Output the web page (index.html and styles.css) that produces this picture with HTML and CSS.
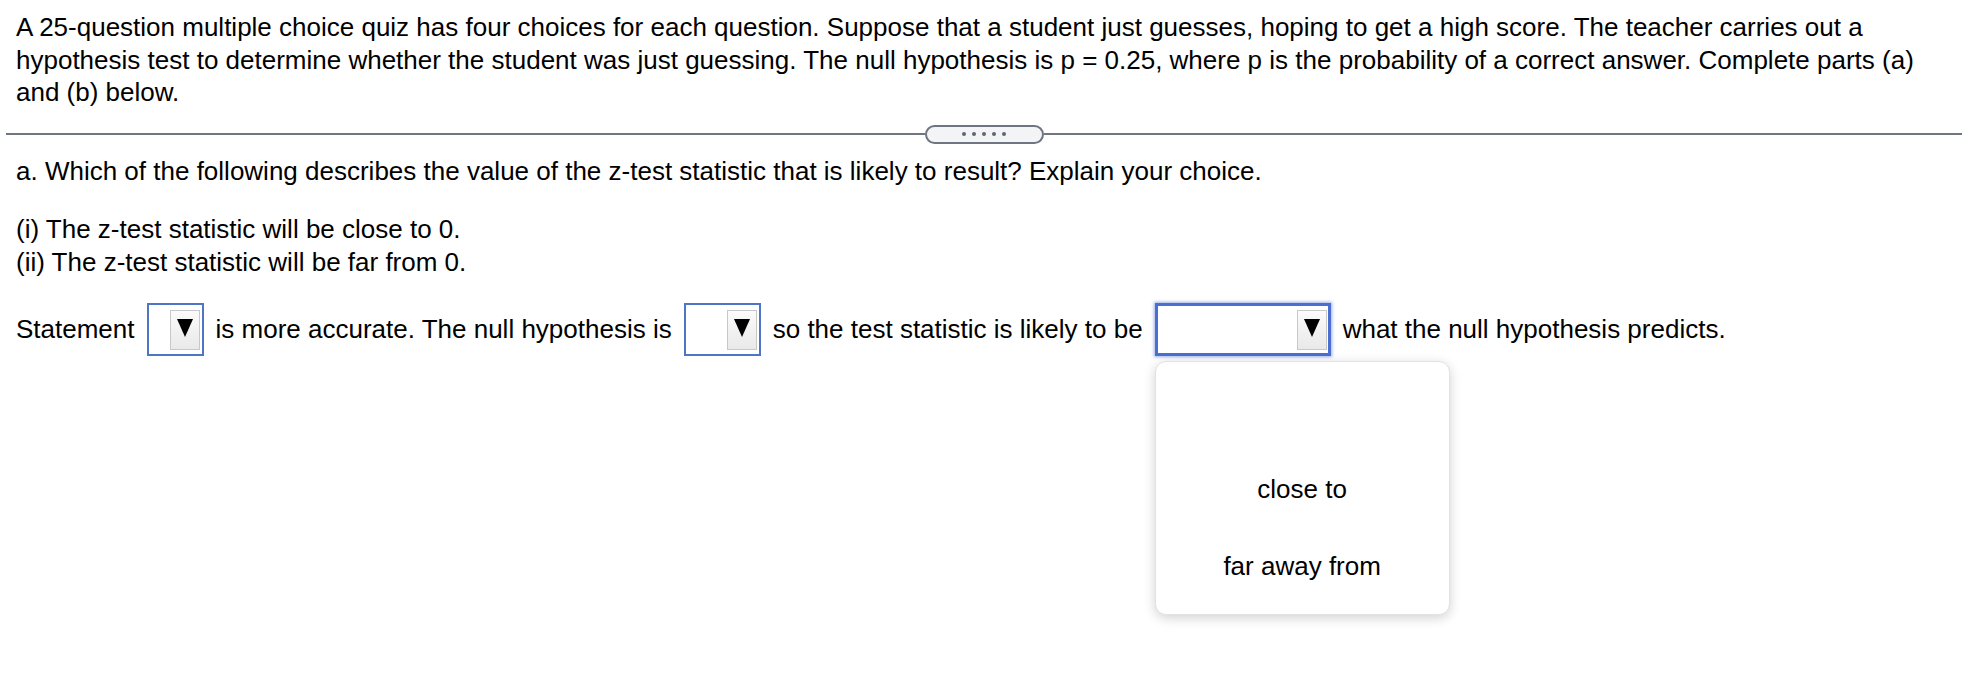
FILE: index.html
```html
<!DOCTYPE html>
<html>
<head>
<meta charset="utf-8">
<link rel="stylesheet" href="styles.css">
</head>
<body>
<div class="page">
  <p class="intro">A 25-question multiple choice quiz has four choices for each question. Suppose that a student just guesses, hoping to get a high score. The teacher carries out a hypothesis test to determine whether the student was just guessing. The null hypothesis is p = 0.25, where p is the probability of a correct answer. Complete parts (a) and (b) below.</p>

  <div class="divider">
    <div class="rule"></div>
    <div class="pill"><span></span><span></span><span></span><span></span><span></span></div>
    <div class="rule"></div>
  </div>

  <p class="part">a. Which of the following describes the value of the z-test statistic that is likely to result? Explain your choice.</p>

  <p class="options">(i) The z-test statistic will be close to 0.<br>(ii) The z-test statistic will be far from 0.</p>

  <div class="answer">
    <span>Statement</span>
    <span class="select s1"><span class="btn"><svg width="16" height="18" viewBox="0 0 16 18"><polygon points="0,0 16,0 8,18" fill="#000"/></svg></span></span>
    <span>is more accurate. The null hypothesis is</span>
    <span class="select s2"><span class="btn"><svg width="16" height="18" viewBox="0 0 16 18"><polygon points="0,0 16,0 8,18" fill="#000"/></svg></span></span>
    <span>so the test statistic is likely to be</span>
    <span class="dd">
      <span class="select s3 focus"><span class="btn"><svg width="16" height="18" viewBox="0 0 16 18"><polygon points="0,0 16,0 8,18" fill="#000"/></svg></span></span>
      <span class="menu">
        <span class="item">close to</span>
        <span class="item">far away from</span>
      </span>
    </span>
    <span>what the null hypothesis predicts.</span>
  </div>
</div>
</body>
</html>
```

FILE: styles.css
```css
html, body {
  margin: 0;
  padding: 0;
  background: #ffffff;
  min-height: 674px;
}
body {
  font-family: "Liberation Sans", Arial, sans-serif;
  font-size: 26px;
  line-height: 32.5px;
  color: #000;
}
.page {
  box-sizing: border-box;
  min-height: 674px;
  padding: 11px 0 0 0;
}
p {
  margin: 0;
}
.intro {
  padding: 0 16px;
}
.divider {
  display: flex;
  align-items: center;
  margin: 16px 4px 0 6px;
  height: 19px;
}
.rule {
  flex: 1;
  height: 2px;
  background: #6f7682;
}
.pill {
  width: 115px;
  height: 15px;
  border: 2px solid #6f7682;
  border-radius: 10px;
  background: #f3f4f6;
  display: flex;
  align-items: center;
  justify-content: center;
  gap: 6px;
}
.pill span {
  width: 4px;
  height: 4px;
  border-radius: 50%;
  background: #5f6670;
}
.part {
  padding: 0 16px;
  margin-top: 11px;
}
.options {
  padding: 0 16px;
  margin-top: 26px;
}
.answer {
  display: flex;
  align-items: center;
  gap: 12px;
  padding: 0 16px;
  margin-top: 25px;
}
.select {
  box-sizing: border-box;
  height: 53px;
  border: 2px solid #4f75c7;
  background: #fff;
  display: flex;
  align-items: center;
  justify-content: flex-end;
  padding-right: 2px;
  flex: none;
}
.s1 { width: 57px; }
.s2 { width: 77px; }
.s3 { width: 176px; }
.focus {
  border: 3px solid #4a6fd1;
  box-shadow: 0 0 3px 1px rgba(74, 111, 209, 0.55);
  padding-right: 1px;
}
.btn {
  box-sizing: border-box;
  width: 30px;
  height: 40px;
  border: 1px solid #c8c8c8;
  background: linear-gradient(#fbfbfb, #e9e9e9);
  display: flex;
  align-items: center;
  justify-content: center;
}
.btn svg {
  display: block;
  margin-top: -4px;
}
.dd {
  position: relative;
  display: flex;
  flex: none;
}
.menu {
  position: absolute;
  left: 0;
  top: 58px;
  width: 295px;
  height: 254px;
  box-sizing: border-box;
  border: 1px solid #e2e2e2;
  border-radius: 11px;
  background: #fff;
  box-shadow: 0 3px 12px rgba(0, 0, 0, 0.18);
  display: flex;
  flex-direction: column;
  align-items: center;
  padding-top: 111px;
  gap: 45px;
  z-index: 2;
}
.item {
  display: block;
  line-height: 32px;
}
```
